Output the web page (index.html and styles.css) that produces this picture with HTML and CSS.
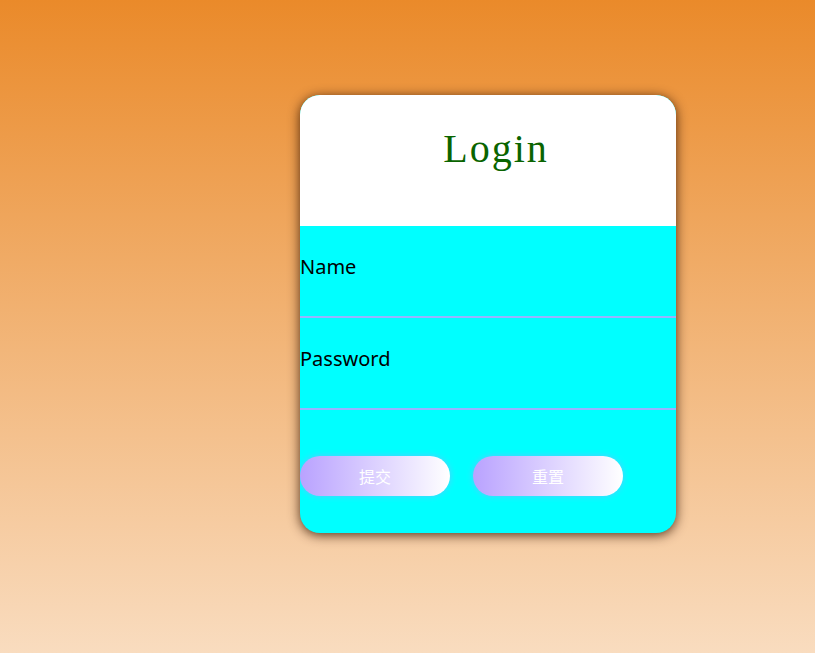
FILE: index.html
```html
<!DOCTYPE html>
<html>
<head>
<meta charset="utf-8">
<link rel="stylesheet" href="styles.css">
</head>
<body>
<div class="card">
  <div class="head"><h1 class="title">Login</h1></div>
  <div class="row"><span class="label">Name</span></div>
  <div class="row"><span class="label">Password</span></div>
  <div class="actions">
    <button class="btn">提交</button>
    <button class="btn">重置</button>
  </div>
</div>
</body>
</html>
```
FILE: styles.css
```css
html, body {
  margin: 0;
  padding: 0;
}
body {
  height: 653px;
  background: linear-gradient(to bottom, #ea8a2a 0%, #f9dcbf 100%);
  font-family: "Noto Sans", "Noto Sans CJK SC", sans-serif;
  overflow: hidden;
}
.card {
  width: 376px;
  height: 438px;
  margin: 95px 0 0 300px;
  border-radius: 20px;
  overflow: hidden;
  background: #00ffff;
  box-shadow: 0 2px 12px rgba(50, 20, 0, 0.85);
  display: flex;
  flex-direction: column;
}
.head {
  height: 131px;
  flex: none;
  background: #ffffff;
  box-sizing: border-box;
  padding-top: 34px;
}
.title {
  margin: 0;
  padding-left: 16px;
  text-align: center;
  font-family: "Liberation Serif", serif;
  font-weight: normal;
  font-size: 40px;
  line-height: 40px;
  letter-spacing: 2px;
  color: #0a6400;
}
.row {
  height: 92px;
  flex: none;
  box-sizing: border-box;
  border-bottom: 2px solid #98b4ff;
  display: flex;
  align-items: center;
  padding-bottom: 8px;
}
.row .label {
  font-size: 20px;
  color: #000;
  line-height: 24px;
}
.actions {
  display: flex;
  gap: 23px;
  padding-top: 46px;
}
.btn {
  width: 150px;
  height: 40px;
  border: none;
  border-radius: 20px;
  background: linear-gradient(to right, #b9a2ff 0%, #ffffff 100%);
  box-shadow: 0 0 6px #5fc8ff;
  color: #ffffff;
  font-family: "Noto Sans CJK SC", sans-serif;
  font-size: 16px;
  padding: 0;
  cursor: pointer;
}
```
